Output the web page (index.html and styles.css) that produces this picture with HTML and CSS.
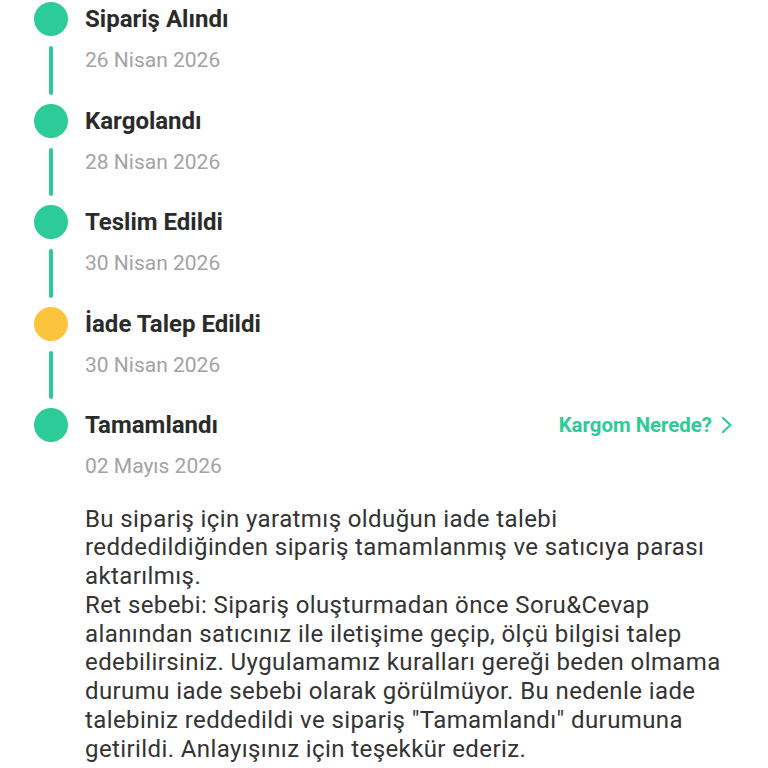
FILE: index.html
```html
<!DOCTYPE html>
<html lang="tr">
<head>
<meta charset="utf-8">
<link rel="stylesheet" href="styles.css">
</head>
<body>
<div class="page">
  <div class="timeline">
    <div class="step">
      <div class="rail"><div class="dot"></div><div class="line"></div></div>
      <div class="content">
        <div class="title">Sipariş Alındı</div>
        <div class="date">26 Nisan 2026</div>
      </div>
    </div>
    <div class="step">
      <div class="rail"><div class="dot"></div><div class="line"></div></div>
      <div class="content">
        <div class="title">Kargolandı</div>
        <div class="date">28 Nisan 2026</div>
      </div>
    </div>
    <div class="step">
      <div class="rail"><div class="dot"></div><div class="line"></div></div>
      <div class="content">
        <div class="title">Teslim Edildi</div>
        <div class="date">30 Nisan 2026</div>
      </div>
    </div>
    <div class="step">
      <div class="rail"><div class="dot dot-warn"></div><div class="line"></div></div>
      <div class="content">
        <div class="title">İade Talep Edildi</div>
        <div class="date">30 Nisan 2026</div>
      </div>
    </div>
    <div class="step step-last">
      <div class="rail"><div class="dot"></div></div>
      <div class="content">
        <div class="title-row">
          <div class="title">Tamamlandı</div>
          <a class="track">Kargom Nerede?<svg class="chev" width="12" height="18" viewBox="0 0 12 18"><path d="M2 2 L9.5 9 L2 16" fill="none" stroke="currentColor" stroke-width="2.2" stroke-linecap="round" stroke-linejoin="round"/></svg></a>
        </div>
        <div class="date">02 Mayıs 2026</div>
      </div>
    </div>
  </div>
  <p class="note">Bu sipariş için yaratmış olduğun iade talebi<br>reddedildiğinden sipariş tamamlanmış ve satıcıya parası<br>aktarılmış.<br>Ret sebebi: Sipariş oluşturmadan önce Soru&amp;Cevap<br>alanından satıcınız ile iletişime geçip, ölçü bilgisi talep<br>edebilirsiniz. Uygulamamız kuralları gereği beden olmama<br>durumu iade sebebi olarak görülmüyor. Bu nedenle iade<br>talebiniz reddedildi ve sipariş "Tamamlandı" durumuna<br>getirildi. Anlayışınız için teşekkür ederiz.</p>
</div>
</body>
</html>
```

FILE: styles.css
```css
html, body {
  margin: 0;
  padding: 0;
  background: #ffffff;
}
.page {
  width: 768px;
  height: 768px;
  overflow: hidden;
  font-family: Roboto, "Noto Sans", sans-serif;
  color: #2d2d2d;
}
.timeline {
  padding: 2px 35px 0 34px;
}
.step {
  display: flex;
  height: 101.5px;
}
.rail {
  width: 34px;
  display: flex;
  flex-direction: column;
  align-items: center;
  flex: none;
}
.dot {
  width: 34px;
  height: 34px;
  border-radius: 50%;
  background: #2ccb97;
  flex: none;
}
.dot-warn {
  background: #fcc43c;
}
.line {
  width: 4px;
  flex: 1;
  margin: 10px 0 9px;
  background: #2ccb97;
  border-radius: 2px;
}
.content {
  flex: 1;
  padding-left: 17px;
}
.title-row {
  display: flex;
  justify-content: space-between;
  align-items: center;
}
.title {
  font-size: 24px;
  font-weight: 700;
  line-height: 34px;
  color: #2b2b2b;
}
.date {
  margin-top: 12px;
  font-size: 21px;
  line-height: 24px;
  color: #a3a3a3;
}
.track {
  display: flex;
  align-items: center;
  gap: 9px;
  font-size: 20.4px;
  font-weight: 700;
  color: #2ccb97;
}
.chev {
  display: block;
}
.note {
  margin: -5px 0 0;
  padding: 0 0 0 85px;
  font-size: 24px;
  line-height: 28.75px;
  letter-spacing: 0.4px;
  color: #333333;
  white-space: nowrap;
}
```
